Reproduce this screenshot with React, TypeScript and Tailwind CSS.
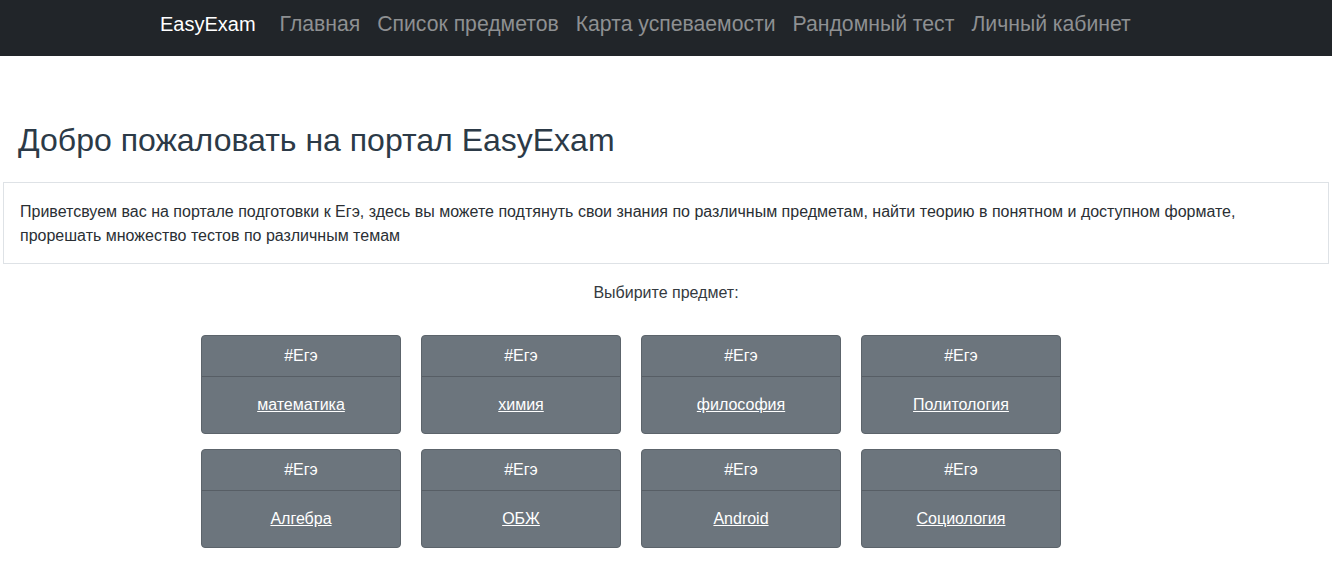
import React from "react";

const subjects = ["математика", "химия", "философия", "Политология", "Алгебра", "ОБЖ", "Android", "Социология"];

export default function App() {
  return (
    <div className="min-h-[586px] bg-white" style={{ fontFamily: '"Liberation Sans", Arial, sans-serif' }}>
      <nav className="h-14 bg-[#212529] flex items-center pl-[160px] pb-[8px]">
        <span className="text-white text-[20px] mr-[24px]">EasyExam</span>
        <div className="flex gap-[17px] text-[21.2px] text-[#8e9092]">
          <span>Главная</span>
          <span>Список предметов</span>
          <span>Карта успеваемости</span>
          <span>Рандомный тест</span>
          <span>Личный кабинет</span>
        </div>
      </nav>
      <h1 className="text-[32px] leading-[38px] text-[#2c3a47] pl-[18px] mt-[65px]">Добро пожаловать на портал EasyExam</h1>
      <div className="mx-[3px] mt-[23px] border border-[#dee2e6] px-[16px] pt-[17px] pb-[15px] text-[16px] leading-[24px] text-[#2a2f34]">
        Приветсвуем вас на портале подготовки к Егэ, здесь вы можете подтянуть свои знания по различным предметам, найти теорию в понятном и доступном формате, прорешать множество тестов по различным темам
      </div>
      <p className="text-center text-[16px] leading-[24px] text-[#343a40] mt-[17px]">Выбирите предмет:</p>
      <div className="grid grid-cols-[repeat(4,200px)] gap-x-5 gap-y-[15px] ml-[201px] mt-[30px]">
        {subjects.map((s) => (
          <div key={s} className="h-[99px] bg-[#6c757d] border border-[#5c646b] rounded flex flex-col text-white text-[16px]">
            <div className="h-[41px] flex items-center justify-center border-b border-[#575e65]">#Егэ</div>
            <div className="flex-1 flex items-center justify-center">
              <a className="underline">{s}</a>
            </div>
          </div>
        ))}
      </div>
    </div>
  );
}
